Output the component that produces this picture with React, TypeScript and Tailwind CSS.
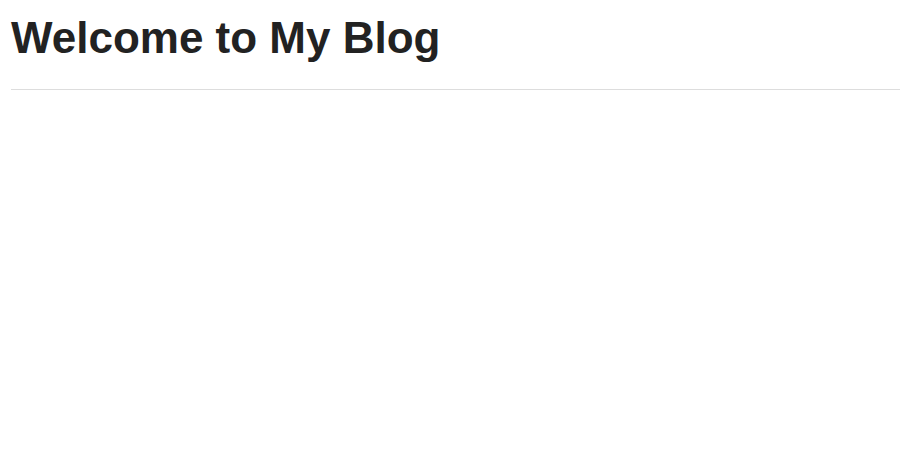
export default function App() {
  return (
    <div className="min-h-screen bg-white pl-[11px] pr-[9px] pt-[5px] font-['Liberation_Sans',Arial,sans-serif] text-[#222]">
      <header className="border-b border-[#ddd] pb-[18px]">
        <h1 className="text-[44px] font-bold leading-normal">Welcome to My Blog</h1>
      </header>
    </div>
  )
}
